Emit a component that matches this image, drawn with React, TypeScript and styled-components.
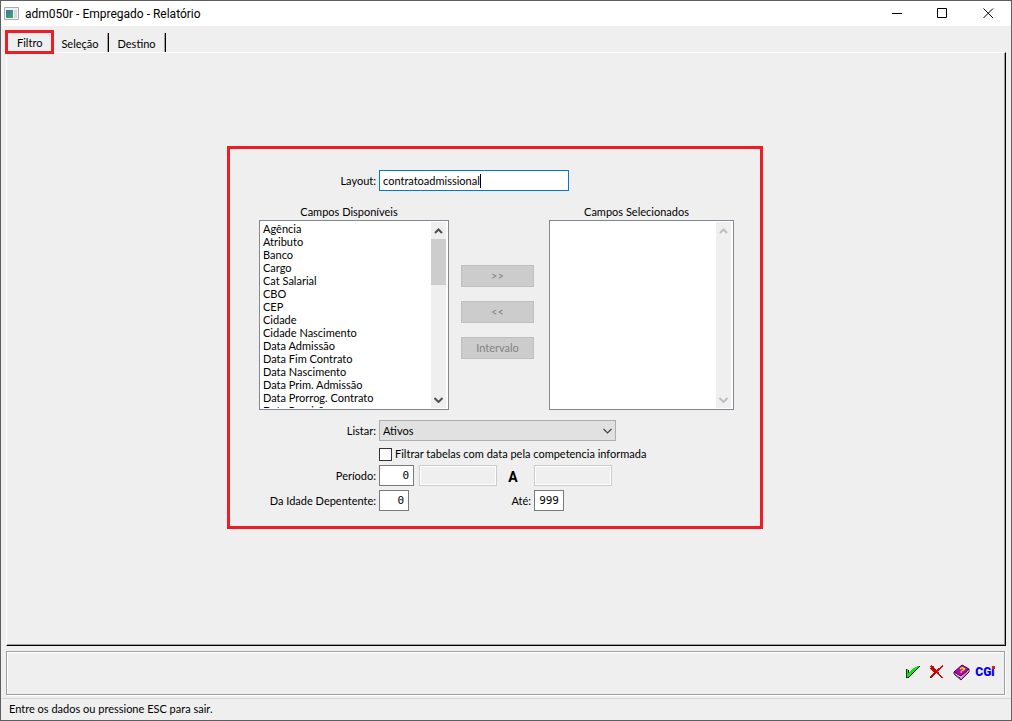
import React, { useId } from "react";
import styled, { createGlobalStyle, css } from "styled-components";

const ui = `Lato, "Liberation Sans", sans-serif`;
const titleFont = `Roboto, "Noto Sans", sans-serif`;
const mono = `"DejaVu Sans Mono", "Liberation Mono", monospace`;

const GlobalStyle = createGlobalStyle`
  *, *::before, *::after { box-sizing: border-box; }
  body { margin: 0; background: #efefef; font: 11px/14px ${ui}; color: #000; }
  button, input, select { font: inherit; color: inherit; margin: 0; border-radius: 0; }
`;

const Window = styled.div`
  display: flex;
  flex-direction: column;
  min-height: 100vh;
  border: 1px solid #5f5f5f;
  background: #efefef;
`;

const TitleBar = styled.header`
  display: flex;
  align-items: center;
  height: 25px;
  padding-left: 3px;
  background: #fff;
`;

const Title = styled.h1`
  flex: 1;
  margin: 0 0 0 5px;
  font: 400 12px/16px ${titleFont};
`;

const CaptionButton = styled.button`
  display: grid;
  place-items: center;
  width: 46px;
  height: 25px;
  padding: 0;
  border: 0;
  background: transparent;
`;

const Content = styled.main`
  display: flex;
  flex: 1;
  flex-direction: column;
  padding: 4px 5px 3px;
`;

const Tabs = styled.nav`
  display: flex;
  align-items: flex-end;
  height: 22px;
`;

const Tab = styled.button<{ $active?: boolean }>`
  height: 19px;
  padding: 2px 9px 0;
  border: 0;
  border-right: 1px solid #000;
  box-shadow: inset -1px 0 #a0a0a0;
  background: transparent;
  ${(p) =>
    p.$active &&
    css`
      align-self: flex-start;
      z-index: 1;
      height: 24px;
      margin: 0 -2px 0 -1px;
      padding-top: 1px;
      border: 3px solid #ee1c25;
      box-shadow: none;
    `}
`;

const Panel = styled.section`
  flex: 1;
  margin-bottom: 5px;
  padding: 93px 22px 93px 0;
  border: 1px solid #fff;
  border-right-color: #000;
  border-bottom-color: #000;
  box-shadow: inset -1px -1px #a0a0a0;
`;

const FilterForm = styled.form`
  display: flex;
  flex-direction: column;
  width: 536px;
  margin: 0 auto;
  padding: 21px 26px 15px 0;
  border: 3px solid #ee1c25;
`;

const Row = styled.div<{ $gap?: number }>`
  display: flex;
  align-items: center;
  margin-top: ${(p) => p.$gap ?? 0}px;
`;

const Label = styled.label<{ $width?: number }>`
  width: ${(p) => p.$width ?? 146}px;
  margin-right: 3px;
  text-align: right;
`;

const TextBox = styled.div`
  display: flex;
  align-items: center;
  width: 190px;
  height: 21px;
  padding-left: 3px;
  border: 1px solid #0078d7;
  background: #fff;
`;

const TextInput = styled.input`
  field-sizing: content;
  padding: 0;
  border: 0;
  outline: 0;
  background: transparent;
`;

const Caret = styled.span`
  width: 1px;
  height: 14px;
  background: #000;
`;

const Lists = styled.div`
  display: flex;
  margin: 14px 0 0 29px;
`;

const ListColumn = styled.div<{ $width: number }>`
  display: flex;
  flex-direction: column;
  width: ${(p) => p.$width}px;
`;

const ListLabel = styled.label`
  height: 15px;
  padding-right: 10px;
  text-align: center;
`;

const ListFrame = styled.div`
  display: flex;
  height: 190px;
  padding: 1px;
  border: 1px solid #828790;
  background: #fff;
`;

const ListBox = styled.select`
  flex: 1;
  height: 186px;
  padding: 0;
  border: 0;
  outline: 0;
  background: #fff;
  scrollbar-width: none;

  option {
    min-height: 13px;
    height: 13px;
    padding: 0 2px;
    line-height: 13px;
  }
`;

const ScrollTrack = styled.div`
  display: flex;
  flex-direction: column;
  width: 15px;
  margin-right: 1px;
  background: #efefef;
`;

const ScrollThumb = styled.div`
  height: 46px;
  background: #cdcdcd;
`;

const ScrollArrow = styled.span<{ $bottom?: boolean }>`
  display: grid;
  place-items: center;
  height: 17px;
  margin-top: ${(p) => (p.$bottom ? "auto" : "0")};
`;

const Transfer = styled.div`
  display: flex;
  flex-direction: column;
  gap: 14px;
  width: 73px;
  margin: 60px 15px 0 12px;
`;

const TransferButton = styled.button`
  height: 22px;
  padding: 0;
  border: 1px solid #bfbfbf;
  background: #cccccc;
  color: #838383;
`;

const SelectWrap = styled.div`
  display: grid;
  width: 237px;
  height: 21px;

  > * { grid-area: 1 / 1; }
  > svg { align-self: center; justify-self: end; margin-right: 4px; pointer-events: none; }
`;

const Select = styled.select`
  appearance: none;
  padding: 0 3px;
  border: 1px solid #adadad;
  background: #e1e1e1;
`;

const CheckBox = styled.input`
  appearance: none;
  width: 13px;
  height: 13px;
  margin-left: 149px;
  border: 1px solid #333;
  background: #fff;
`;

const CheckLabel = styled.label`
  margin-left: 3px;
`;

const NumberBox = styled.input<{ $width: number }>`
  width: ${(p) => p.$width}px;
  height: 21px;
  padding: 0 4px 0 0;
  border: 1px solid #7a7a7a;
  background: #fff;
  font: 11px/14px ${mono};
  text-align: right;
`;

const DateBox = styled.input`
  width: 78px;
  height: 21px;
  border: 1px solid #ccc;
  background: #efefef;
  box-shadow: inset 0 0 0 1px #fff;
`;

const PeriodStart = styled.span`
  display: flex;
  gap: 5px;
`;

const Separator = styled.strong`
  width: 37px;
  padding: 3px 5px 0 0;
  font: 700 14px/14px Roboto, sans-serif;
  text-align: center;
`;

const ActionBar = styled.div`
  display: flex;
  align-items: center;
  justify-content: flex-end;
  gap: 4px;
  height: 44px;
  margin-right: 1px;
  padding: 0 9px 2px 0;
  border: 1px solid #a0a0a0;
  box-shadow: inset 1px 1px #fff, 1px 1px #fff;
`;

const IconButton = styled.button`
  display: grid;
  place-items: center;
  width: 20px;
  height: 20px;
  padding: 0;
  border: 0;
  background: transparent;
`;

const Brand = styled(IconButton)`
  position: relative;
  color: #0000f0;
  font: 900 12px/14px Roboto, sans-serif;

  &::after {
    content: "";
    position: absolute;
    top: 4px;
    right: 0;
    width: 3px;
    height: 3px;
    background: #e02020;
  }
`;

const StatusBar = styled.footer`
  height: 22px;
  padding: 3px 8px;
  border-top: 1px solid #d7d7d7;
`;

const fields = [
  "Agência", "Atributo", "Banco", "Cargo", "Cat Salarial", "CBO", "CEP", "Cidade",
  "Cidade Nascimento", "Data Admissão", "Data Fim Contrato", "Data Nascimento",
  "Data Prim. Admissão", "Data Prorrog. Contrato", "Data Rescisão",
];

function Chevron({ up, thin, color }: { up?: boolean; thin?: boolean; color: string }) {
  return (
    <svg width="9" height="6" viewBox="0 0 9 6" aria-hidden="true">
      <path
        d={up ? "M1 5 4.5 1.5 8 5" : "M.5 1 4.5 5 8.500 1"}
        fill="none"
        stroke={color}
        strokeWidth={thin ? 1.2 : 2}
      />
    </svg>
  );
}

function CheckIcon() {
  return (
    <svg width="14" height="14" viewBox="0 0 14 14" shapeRendering="crispEdges" aria-hidden="true">
      <path d="M1 5h2v3h1v-1h1v-1h1v-1h1v-1h2v-1h1v-1h2v-1h2v1h-1v1h-1v1h-1v1h-1v1h-1v1h-1v1h-1v1h-1v1h-1v1h-1v1h-1v1h-2z" fill="#000" />
      <path d="M0 4h2v4h1v-1h1v-1h1v-1h1v-1h1v-1h2v-1h2v-1h2v1h-1v1h-1v1h-1v1h-1v1h-1v1h-1v1h-1v1h-1v1h-1v1h-1v1h-2z" fill="#00f000" />
      <path d="M0 4v8h2" fill="none" stroke="#083808" />
    </svg>
  );
}

function CancelIcon() {
  return (
    <svg width="14" height="14" viewBox="0 0 14 14" shapeRendering="crispEdges" aria-hidden="true">
      <path d="M1 1l4 4 3 3 4 5M13 1 9 4 5 8 1 12" fill="none" stroke="#e00000" strokeWidth="1.5" />
      <path d="M1 2h2l2 3 2 1-1 2-5 5H0v-1l4-4-2-3-2-1z" fill="#d00000" />
      <path d="M1 1h3M0 12l3-3M8 9l3 3" fill="none" stroke="#803030" />
    </svg>
  );
}

function BookIcon() {
  return (
    <svg width="17" height="17" viewBox="0 0 17 17" aria-hidden="true">
      <path d="M1 10 8 16 16 8V5L8 12 1 8z" fill="#fff" stroke="#500050" />
      <path d="M1 8 9 1l7 4-8 7z" fill="#c000c0" stroke="#400040" />
      <path d="M2 10.500l6 4 7-7" fill="none" stroke="#900090" />
      <path d="m7 5 2-1.500 2.500 1L10.500 6 8.500 6.500M7.500 8h1.500" fill="none" stroke="#ffe000" strokeWidth="1.5" />
    </svg>
  );
}

function FieldList({ label, width, items }: { label: string; width: number; items: string[] }) {
  const id = useId();
  const color = items.length ? "#505050" : "#bfbfbf";
  return (
    <ListColumn $width={width}>
      <ListLabel htmlFor={id}>{label}</ListLabel>
      <ListFrame>
        <ListBox id={id} multiple>
          {items.map((item) => <option key={item}>{item}</option>)}
        </ListBox>
        <ScrollTrack aria-hidden="true">
          <ScrollArrow><Chevron up color={color} /></ScrollArrow>
          {items.length > 0 && <ScrollThumb />}
          <ScrollArrow $bottom><Chevron color={color} /></ScrollArrow>
        </ScrollTrack>
      </ListFrame>
    </ListColumn>
  );
}

export default function App() {
  return (
    <>
      <GlobalStyle />
      <Window>
        <TitleBar>
          <svg width="16" height="14" viewBox="0 0 16 14" aria-hidden="true">
            <defs>
              <linearGradient id="app" x2="1" y2="1">
                <stop stopColor="#3d6fa8" />
                <stop offset="1" stopColor="#3fae62" />
              </linearGradient>
            </defs>
            <path d="M.5.500h14v12H.5z" fill="#f4f4f4" stroke="#aaa" />
            <path d="M2 3h7v8H2z" fill="url(#app)" />
            <path d="M10 3h3v8h-3z" fill="#d5dbe0" />
          </svg>
          <Title>adm050r - Empregado - Relatório</Title>
          <CaptionButton aria-label="Minimizar">
            <svg width="11" height="11"><path d="M1 5.500h10" stroke="#000" /></svg>
          </CaptionButton>
          <CaptionButton aria-label="Maximizar">
            <svg width="11" height="11"><path d="M.5.5h9v9h-9z" fill="none" stroke="#000" /></svg>
          </CaptionButton>
          <CaptionButton aria-label="Fechar">
            <svg width="11" height="11"><path d="m.5.5 9.500 9.500M10 .5.5 10" stroke="#000" /></svg>
          </CaptionButton>
        </TitleBar>
        <Content>
          <Tabs>
            <Tab $active>Filtro</Tab>
            <Tab>Seleção</Tab>
            <Tab>Destino</Tab>
          </Tabs>
          <Panel>
            <FilterForm>
              <Row>
                <Label htmlFor="layout">Layout:</Label>
                <TextBox>
                  <TextInput id="layout" defaultValue="contratoadmissional" />
                  <Caret />
                </TextBox>
              </Row>
              <Lists>
                <FieldList label="Campos Disponíveis" width={190} items={fields} />
                <Transfer>
                  <TransferButton type="button" disabled>&gt;&gt;</TransferButton>
                  <TransferButton type="button" disabled>&lt;&lt;</TransferButton>
                  <TransferButton type="button" disabled>Intervalo</TransferButton>
                </Transfer>
                <FieldList label="Campos Selecionados" width={185} items={[]} />
              </Lists>
              <Row $gap={10}>
                <Label htmlFor="list">Listar:</Label>
                <SelectWrap>
                  <Select id="list"><option>Ativos</option></Select>
                  <Chevron thin color="#444" />
                </SelectWrap>
              </Row>
              <Row $gap={6}>
                <CheckBox type="checkbox" id="filter" />
                <CheckLabel htmlFor="filter">Filtrar tabelas com data pela competencia informada</CheckLabel>
              </Row>
              <Row $gap={4}>
                <Label htmlFor="period">Período:</Label>
                <PeriodStart>
                  <NumberBox id="period" $width={35} defaultValue="0" />
                  <DateBox aria-label="Início do período" readOnly />
                </PeriodStart>
                <Separator>A</Separator>
                <DateBox aria-label="Fim do período" readOnly />
              </Row>
              <Row $gap={4}>
                <Label htmlFor="ageFrom">Da Idade Depentente:</Label>
                <NumberBox id="ageFrom" $width={30} defaultValue="0" />
                <Label htmlFor="ageTo" $width={122}>Até:</Label>
                <NumberBox id="ageTo" $width={30} defaultValue="999" />
              </Row>
            </FilterForm>
          </Panel>
          <ActionBar>
            <IconButton aria-label="Confirmar"><CheckIcon /></IconButton>
            <IconButton aria-label="Cancelar"><CancelIcon /></IconButton>
            <IconButton aria-label="Ajuda"><BookIcon /></IconButton>
            <Brand>CGi</Brand>
          </ActionBar>
        </Content>
        <StatusBar>Entre os dados ou pressione ESC para sair.</StatusBar>
      </Window>
    </>
  );
}
